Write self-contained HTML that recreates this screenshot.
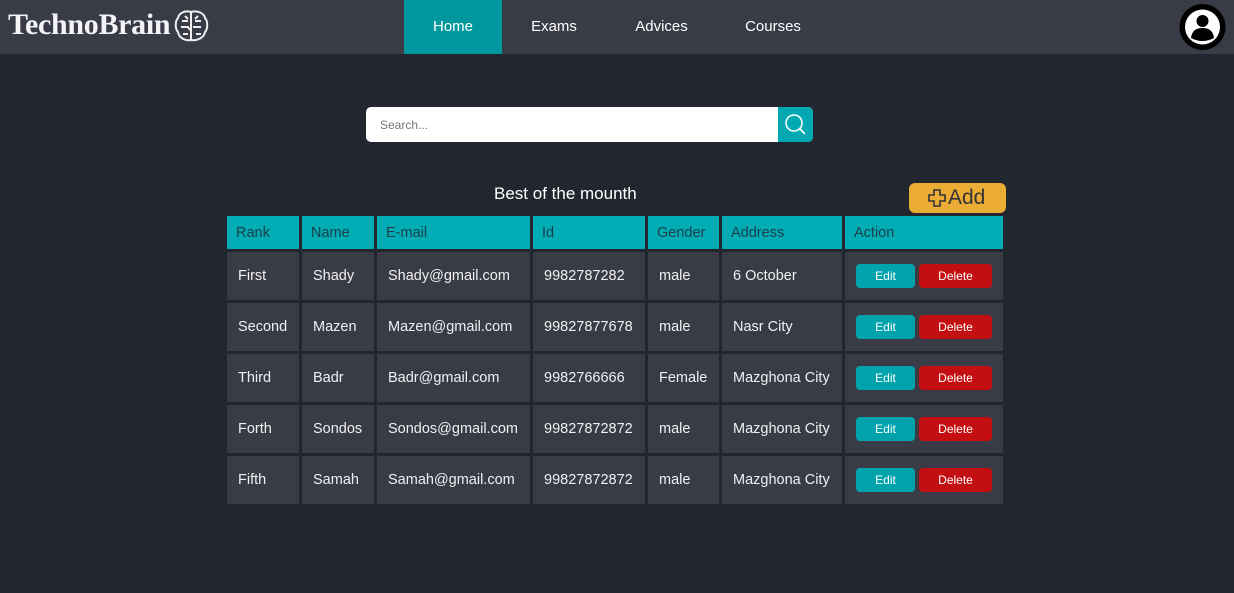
<!DOCTYPE html>
<html><head><meta charset="utf-8"><style>
*{margin:0;padding:0;box-sizing:border-box}
body{width:1234px;height:593px;background:#22262f;font-family:"Liberation Sans",Arial,sans-serif;position:relative;overflow:hidden}
.nav{position:absolute;left:0;top:0;width:1234px;height:54px;background:#393c47}
.logo{position:absolute;left:8px;top:8px;font-family:"Liberation Serif",serif;font-weight:bold;font-size:30px;color:#f4f4f8;letter-spacing:-0.3px}
.menu a{position:absolute;top:0;height:54px;line-height:54px;color:#fff;font-size:15px;text-align:center;text-decoration:none}
.search{position:absolute;left:366px;top:107px;width:447px;height:35px;background:#fff;border-radius:5px;overflow:hidden}
.search span{position:absolute;left:14px;top:11px;font-size:12px;color:#777}
.search .btn{position:absolute;right:0;top:0;width:35px;height:35px;background:#00a9b1}
.title{position:absolute;left:494px;top:184px;color:#fff;font-size:17px}
.add{position:absolute;left:909px;top:183px;width:97px;height:30px;background:#eaac35;border-radius:6px;color:#333;font-size:21px}
table{position:absolute;left:224px;top:213px;border-spacing:3px;font-size:14.5px;color:#f0f0f0;table-layout:fixed;width:782px}
th{background:#00adb5;color:#1d3d48;font-weight:normal;text-align:left;height:33px;padding-left:9px;font-size:14.5px}
td{background:#393c47;height:48px;padding-left:11px;white-space:nowrap;overflow:hidden}
.e,.d{display:inline-block;height:24px;line-height:24px;border-radius:4px;color:#fff;font-size:12px;text-align:center;vertical-align:middle}
.e{width:59px;background:#00a3ac}.d{width:73px;background:#c40f12;margin-left:4px}
</style></head><body>
<div class="nav">
<div class="logo">TechnoBrain</div>
<svg style="position:absolute;left:173px;top:9px" width="37" height="34" viewBox="0 0 37 34" fill="none" stroke="#eee" stroke-width="2"><path d="M18 3C12 1 6 4 5 9C2 12 2 20 5 23C6 29 12 32 18 31C24 32 31 29 32 23C35 20 35 12 32 9C31 4 24 1 18 3Z"/><path d="M18 3V31M9 12h6M22 12h6M8 18h7l2 3M20 18h8M10 25h5M23 25h5M12 7l3 3M25 7l-3 3"/></svg>
<div class="menu"><a style="left:404px;width:98px;background:#00979f">Home</a><a style="left:520px;width:68px">Exams</a><a style="left:624px;width:75px">Advices</a><a style="left:735px;width:76px">Courses</a></div>
<svg style="position:absolute;left:1178px;top:3px" width="49" height="48" viewBox="0 0 49 48"><circle cx="24.5" cy="24" r="23" fill="#000"/><circle cx="24.5" cy="24" r="17.5" fill="#fff"/><circle cx="24.5" cy="18" r="6" fill="#000"/><path d="M13 35C14 27 19 25 24.5 25S35 27 36 35Q24.5 41 13 35Z" fill="#000"/></svg>
</div>
<div class="search"><span>Search...</span><div class="btn"><svg width="35" height="35"><circle cx="16" cy="16" r="8" fill="none" stroke="#fff" stroke-width="1.6"/><path d="M22 22l5 5" stroke="#fff" stroke-width="1.6"/></svg></div></div>
<div class="title">Best of the mounth</div>
<div class="add"><svg style="position:absolute;left:19px;top:6px" width="18" height="18" viewBox="0 0 18 18"><path d="M6 1h6v5h5v6h-5v5H6v-5H1V6h5z" fill="none" stroke="#333" stroke-width="1.6"/></svg><span style="position:absolute;left:39px;top:3px">Add</span></div>
<table>
<colgroup><col style="width:72px"><col style="width:72px"><col style="width:153px"><col style="width:112px"><col style="width:71px"><col style="width:120px"><col style="width:158px"></colgroup>
<tr><th>Rank</th><th>Name</th><th>E-mail</th><th>Id</th><th>Gender</th><th>Address</th><th>Action</th></tr>
<tr><td>First</td><td>Shady</td><td>Shady@gmail.com</td><td>9982787282</td><td>male</td><td>6 October</td><td><span class="e">Edit</span><span class="d">Delete</span></td></tr>
<tr><td>Second</td><td>Mazen</td><td>Mazen@gmail.com</td><td>99827877678</td><td>male</td><td>Nasr City</td><td><span class="e">Edit</span><span class="d">Delete</span></td></tr>
<tr><td>Third</td><td>Badr</td><td>Badr@gmail.com</td><td>9982766666</td><td>Female</td><td>Mazghona City</td><td><span class="e">Edit</span><span class="d">Delete</span></td></tr>
<tr><td>Forth</td><td>Sondos</td><td>Sondos@gmail.com</td><td>99827872872</td><td>male</td><td>Mazghona City</td><td><span class="e">Edit</span><span class="d">Delete</span></td></tr>
<tr><td>Fifth</td><td>Samah</td><td>Samah@gmail.com</td><td>99827872872</td><td>male</td><td>Mazghona City</td><td><span class="e">Edit</span><span class="d">Delete</span></td></tr>
</table>
</body></html>
